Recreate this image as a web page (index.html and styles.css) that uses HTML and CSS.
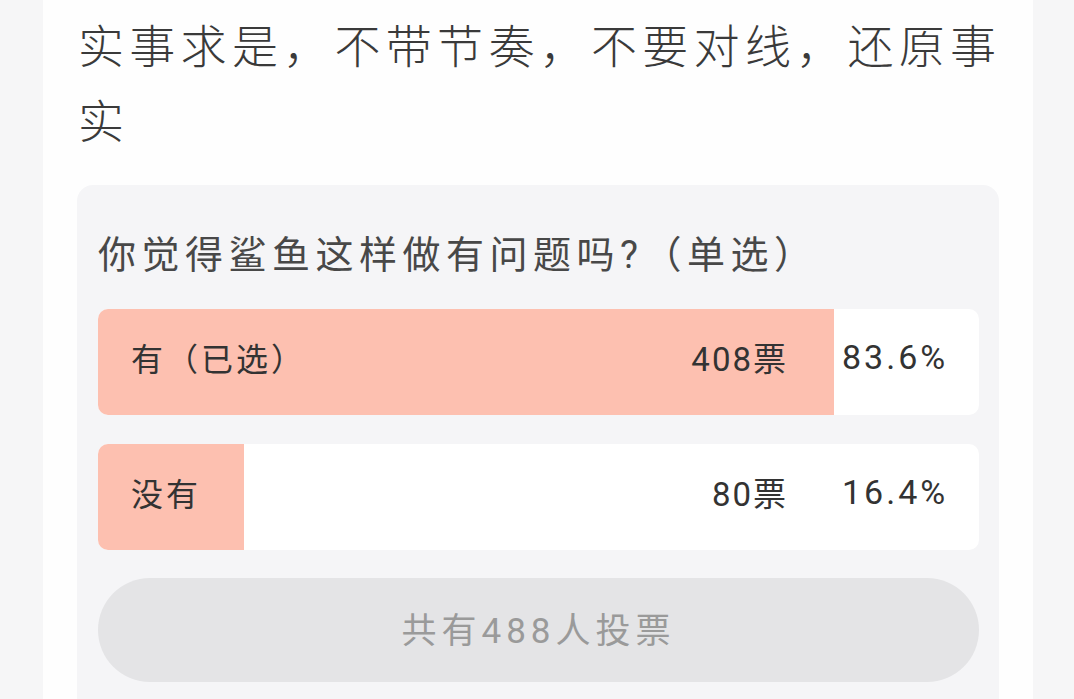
FILE: index.html
```html
<!DOCTYPE html>
<html>
<head>
    <title>投票</title>
    <link rel="stylesheet" href="styles.css">
</head>
<body>
    <div class="page">
        <div class="post">
            <h1 class="post-title">实事求是，不带节奏，不要对线，还原事实</h1>

            <div class="poll">
                <div class="poll-question">你觉得鲨鱼这样做有问题吗?（单选）</div>

                <div class="poll-option">
                    <div class="poll-fill" style="width: 83.5%;"></div>
                    <span class="option-label">有（已选）</span>
                    <span class="option-count">408票</span>
                    <span class="option-percent">83.6%</span>
                </div>

                <div class="poll-option">
                    <div class="poll-fill" style="width: 16.6%;"></div>
                    <span class="option-label">没有</span>
                    <span class="option-count">80票</span>
                    <span class="option-percent">16.4%</span>
                </div>

                <div class="poll-total">共有488人投票</div>
            </div>
        </div>
    </div>
</body>
</html>
```

FILE: styles.css
```css
html, body {
    margin: 0;
    padding: 0;
    height: 100%;
    overflow: hidden;
}

body {
    background: #f6f6f7;
    font-family: Roboto, "Noto Sans CJK SC", sans-serif;
    color: #333;
}

.page {
    display: flex;
    justify-content: flex-start;
    padding-left: 43px;
    height: 100%;
}

.post {
    width: 990px;
    background: #fefefe;
    box-sizing: border-box;
    padding: 10px 26px 0 35px;
}

.post-title {
    margin: 0;
    font-size: 46px;
    font-weight: 300;
    line-height: 75px;
    letter-spacing: 5.3px;
    color: #3a3a3a;
}

.poll {
    margin-top: 25px;
    margin-left: -1px;
    margin-right: 8px;
    background: #f5f5f7;
    border-radius: 16px;
    padding: 45px 20px 40px 21px;
}

.poll-question {
    font-size: 38px;
    line-height: 50px;
    letter-spacing: 5.5px;
    color: #484848;
    margin-bottom: 29px;
}

.poll-option {
    position: relative;
    display: flex;
    align-items: center;
    box-sizing: border-box;
    height: 106px;
    padding-bottom: 10px;
    background: #fff;
    border-radius: 10px;
    overflow: hidden;
    font-size: 32px;
    color: #333;
    margin-bottom: 29px;
}

.poll-fill {
    position: absolute;
    left: 0;
    top: 0;
    bottom: 0;
    background: #fdc0b0;
}

.option-label,
.option-count,
.option-percent {
    position: relative;
}

.option-label {
    flex: 1;
    padding-left: 33px;
    letter-spacing: 3px;
}

.option-count {
    font-size: 33px;
    letter-spacing: 2px;
    margin-right: 54px;
}

.option-percent {
    width: 137px;
    font-size: 34px;
    letter-spacing: 3px;
}

.poll-total {
    box-sizing: border-box;
    height: 104px;
    padding-bottom: 6px;
    border-radius: 52px;
    background: #e4e4e6;
    color: #9a9a9a;
    font-size: 35px;
    letter-spacing: 5px;
    display: flex;
    align-items: center;
    justify-content: center;
    margin-top: -1px;
}
```
